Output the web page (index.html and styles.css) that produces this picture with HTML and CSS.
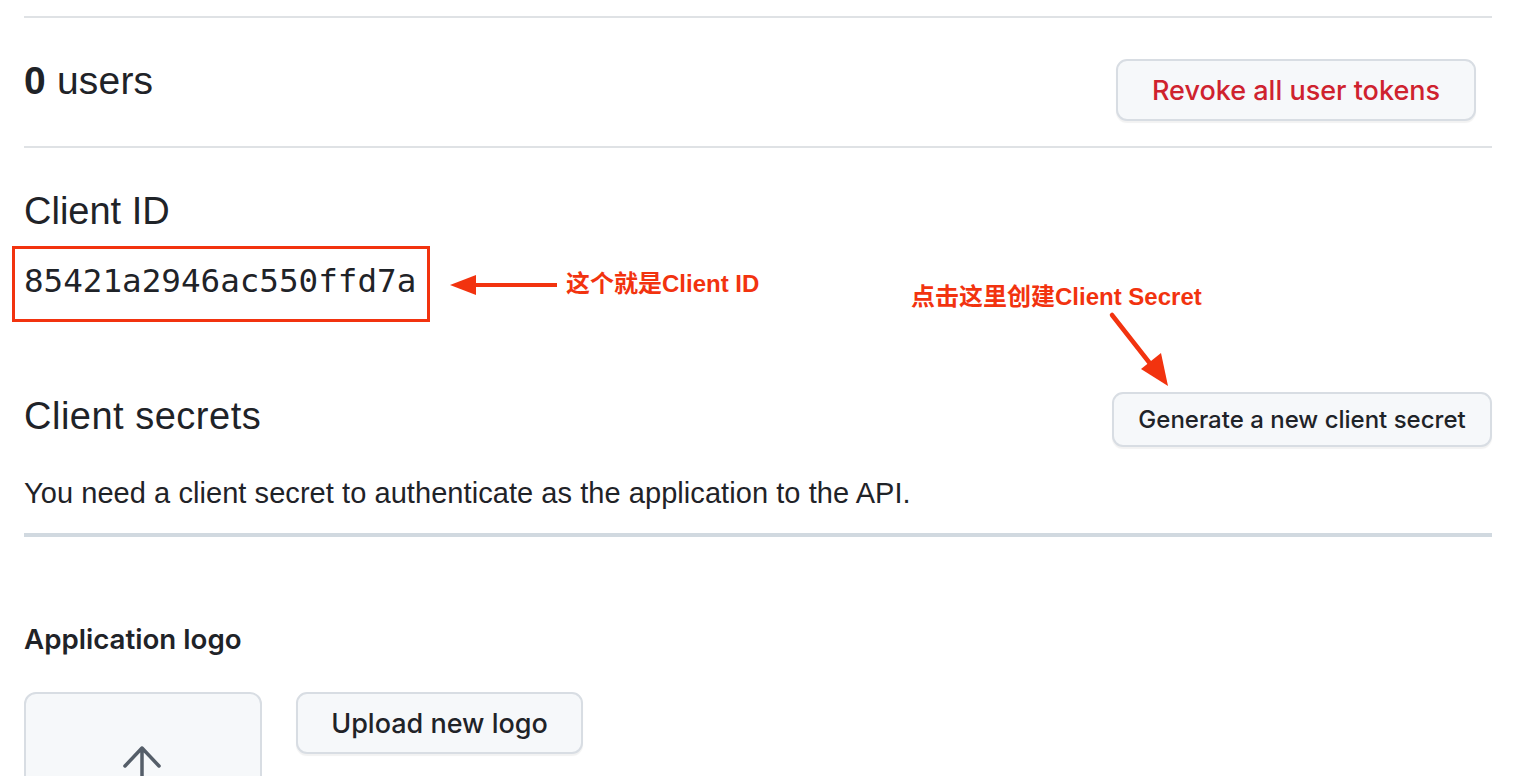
FILE: index.html
```html
<!DOCTYPE html>
<html lang="en">
<head>
<meta charset="utf-8">
<title>OAuth App</title>
<link rel="stylesheet" href="styles.css">
</head>
<body>
<div class="page">
  <div class="rule"></div>
  <div class="users-row">
    <h2 class="users-title"><strong>0</strong> users</h2>
    <button class="btn btn-danger">Revoke all user tokens</button>
  </div>
  <div class="rule"></div>

  <h3 class="section-title client-id-title">Client ID</h3>
  <div class="client-id-box"><code class="client-id">85421a2946ac550ffd7a</code></div>

  <div class="secrets-row">
    <h3 class="section-title secrets-title">Client secrets</h3>
    <button class="btn btn-generate">Generate a new client secret</button>
  </div>
  <p class="secrets-note">You need a client secret to authenticate as the application to the API.</p>
  <div class="rule rule-thick"></div>

  <h4 class="logo-title">Application logo</h4>
  <div class="logo-row">
    <div class="logo-box">
      <svg class="upload-icon" width="40" height="40" viewBox="0 0 40 40" aria-hidden="true">
        <path d="M2 21 L19 3 L36 21 M19 3 V40" fill="none" stroke="#555e69" stroke-width="3.5" stroke-linecap="round" stroke-linejoin="round"/>
      </svg>
    </div>
    <button class="btn btn-upload">Upload new logo</button>
  </div>

  <svg class="annot-arrows" width="1518" height="776" viewBox="0 0 1518 776" aria-hidden="true">
    <line x1="470" y1="285" x2="557" y2="285" stroke="#f2330f" stroke-width="4"/>
    <polygon points="450,285 476,275 476,295" fill="#f2330f"/>
    <line x1="1112" y1="315" x2="1152" y2="366" stroke="#f2330f" stroke-width="4.5" stroke-linecap="round"/>
    <polygon points="1168,386 1141,369 1161,353" fill="#f2330f"/>
  </svg>
  <div class="annot annot-id">这个就是Client ID</div>
  <div class="annot annot-secret">点击这里创建Client Secret</div>
</div>
</body>
</html>
```

FILE: styles.css
```css
* { box-sizing: border-box; }

html, body {
  margin: 0;
  padding: 0;
  background: #ffffff;
}

body {
  font-family: "Liberation Sans", Arial, sans-serif;
  color: #1f2328;
  overflow: hidden;
  height: 776px;
}

.page {
  position: relative;
  height: 776px;
  overflow: hidden;
  padding: 16px 26px 0 24px;
}

.rule {
  height: 2px;
  background: #dfe2e5;
}

.rule-thick {
  height: 4px;
  margin-top: 25px;
  background: #d1d9e0;
}

.users-row {
  display: flex;
  justify-content: space-between;
  align-items: flex-start;
  height: 128px;
}

.users-title {
  margin: 43px 0 0;
  font-size: 39px;
  line-height: 39px;
  font-weight: 400;
  letter-spacing: 0.2px;
}

.users-title strong {
  font-weight: 700;
}

.btn {
  font-family: Inter, "Liberation Sans", sans-serif;
  font-weight: 500;
  background: #f6f8fa;
  border: 2px solid #d8dde3;
  border-radius: 11px;
  box-shadow: 0 2px 1px rgba(31, 35, 40, 0.06);
  color: #1f2328;
  padding: 0;
  cursor: pointer;
}

.btn-danger {
  margin: 41px 16px 0 0;
  width: 360px;
  height: 62px;
  font-size: 27px;
  color: #cf222e;
}

.section-title {
  margin: 0;
  font-size: 38px;
  line-height: 38px;
  font-weight: 400;
}

.client-id-title {
  margin-top: 44px;
}

.client-id-box {
  display: inline-block;
  margin: 16px 0 0 -12px;
  border: 3px solid #f2330f;
  padding: 12px 11px 18px 9px;
}

.client-id {
  display: block;
  font-family: "DejaVu Sans Mono", "Liberation Mono", monospace;
  font-size: 32.6px;
  line-height: 40px;
  color: #1f2328;
}

.secrets-row {
  display: flex;
  justify-content: space-between;
  align-items: flex-start;
  margin-top: 70px;
}

.secrets-title {
  margin-top: 5px;
  letter-spacing: 0.5px;
}

.btn-generate {
  width: 380px;
  height: 55px;
  font-size: 24px;
}

.secrets-note {
  margin: 32px 0 0;
  font-size: 29px;
  line-height: 29px;
  letter-spacing: 0.06px;
}

.logo-title {
  margin: 88px 0 0;
  font-family: Inter, "Liberation Sans", sans-serif;
  font-size: 27.7px;
  line-height: 28px;
  font-weight: 600;
}

.logo-row {
  display: flex;
  align-items: flex-start;
  gap: 34px;
  margin-top: 39px;
}

.logo-box {
  width: 238px;
  height: 238px;
  flex: none;
  background: #f6f8fa;
  border: 2px solid #d8dde3;
  border-radius: 12px;
  display: flex;
  justify-content: center;
  align-items: flex-start;
}

.upload-icon {
  margin-top: 51px;
}

.btn-upload {
  width: 287px;
  height: 62px;
  font-size: 27px;
}

.annot-arrows {
  position: absolute;
  left: 0;
  top: 0;
  pointer-events: none;
}

.annot {
  position: absolute;
  font-family: "Liberation Sans", "Noto Sans CJK SC", sans-serif;
  font-weight: 700;
  font-size: 24px;
  line-height: 24px;
  color: #f2330f;
  white-space: nowrap;
}

.annot-id {
  left: 566px;
  top: 272px;
}

.annot-secret {
  left: 911px;
  top: 285px;
}
```
